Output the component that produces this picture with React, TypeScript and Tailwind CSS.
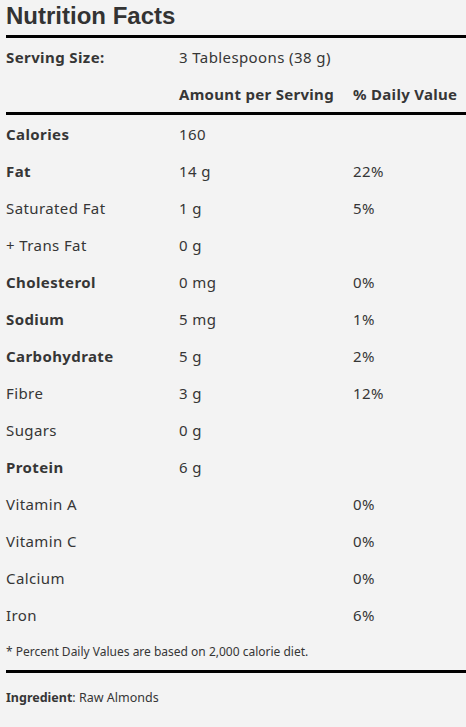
const rows: { name: string; amount: string; dv: string; bold?: boolean }[] = [
  { name: "Calories", amount: "160", dv: "", bold: true },
  { name: "Fat", amount: "14 g", dv: "22%", bold: true },
  { name: "Saturated Fat", amount: "1 g", dv: "5%" },
  { name: "+ Trans Fat", amount: "0 g", dv: "" },
  { name: "Cholesterol", amount: "0 mg", dv: "0%", bold: true },
  { name: "Sodium", amount: "5 mg", dv: "1%", bold: true },
  { name: "Carbohydrate", amount: "5 g", dv: "2%", bold: true },
  { name: "Fibre", amount: "3 g", dv: "12%" },
  { name: "Sugars", amount: "0 g", dv: "" },
  { name: "Protein", amount: "6 g", dv: "", bold: true },
  { name: "Vitamin A", amount: "", dv: "0%" },
  { name: "Vitamin C", amount: "", dv: "0%" },
  { name: "Calcium", amount: "", dv: "0%" },
  { name: "Iron", amount: "", dv: "6%" },
];

const App = () => {
  return (
    <div className="min-h-[727px] bg-[#f3f3f3] pl-[6px] text-[#363636] font-['Noto_Sans',sans-serif] text-[15px]">
      <h1 className="pt-[2px] h-[32px] leading-[28px] text-[24px] font-bold font-['Liberation_Sans',Arial,sans-serif] text-[#333]">
        Nutrition Facts
      </h1>
      <div className="h-[3px] bg-black mt-[3px]" />
      <div className="grid grid-cols-[173px_174px_1fr] h-[37px] pt-[1px] items-center tracking-[0.4px]">
        <span className="font-bold">Serving Size:</span>
        <span>3 Tablespoons (38 g)</span>
        <span />
      </div>
      <div className="grid grid-cols-[173px_174px_1fr] h-[37px] pt-[1px] items-center font-bold tracking-[0.3px]">
        <span />
        <span>Amount per Serving</span>
        <span>% Daily Value</span>
      </div>
      <div className="h-[3px] bg-black" />
      {rows.map((row) => (
        <div
          key={row.name}
          className="grid grid-cols-[173px_174px_1fr] h-[37px] pt-[1px] items-center tracking-[0.4px]"
        >
          <span className={row.bold ? "font-bold" : ""}>{row.name}</span>
          <span>{row.amount}</span>
          <span>{row.dv}</span>
        </div>
      ))}
      <p className="h-[37px] pt-[1px] flex items-center text-[12px]">
        * Percent Daily Values are based on 2,000 calorie diet.
      </p>
      <div className="h-[3px] bg-black" />
      <p className="h-[50px] flex items-center text-[12.5px]">
        <span className="font-bold">Ingredient</span>: Raw Almonds
      </p>
    </div>
  );
};

export default App;
